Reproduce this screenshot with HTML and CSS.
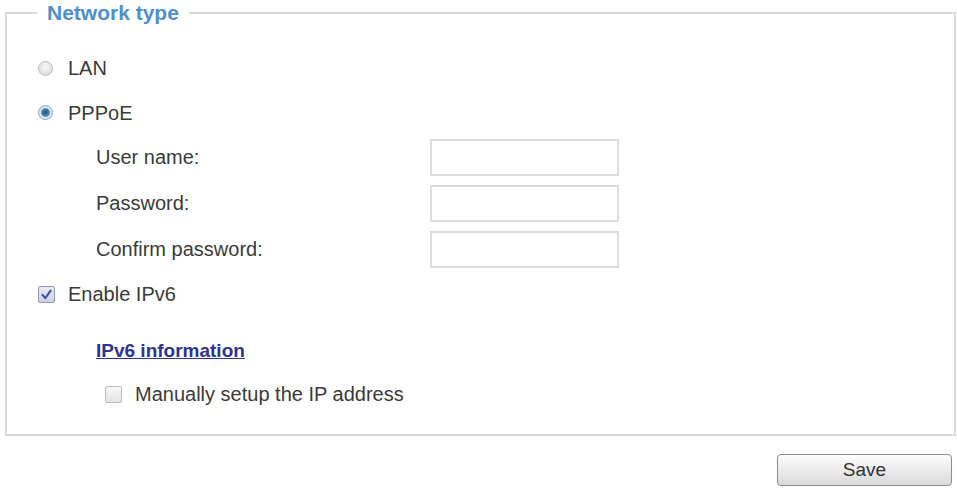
FILE: index.html
```html
<!DOCTYPE html>
<html lang="en">
<head>
<meta charset="utf-8">
<title>Network type</title>
<link rel="stylesheet" href="styles.css">
</head>
<body>
<form class="page">
  <fieldset class="group">
    <legend class="group-title">Network type</legend>
    <div class="row row-lan"><span class="radio"></span><span class="text">LAN</span></div>
    <div class="row row-pppoe"><span class="radio radio-on"></span><span class="text">PPPoE</span></div>
    <div class="fields">
      <div class="field"><span class="field-label">User name:</span><span class="input"></span></div>
      <div class="field"><span class="field-label">Password:</span><span class="input"></span></div>
      <div class="field"><span class="field-label">Confirm password:</span><span class="input"></span></div>
    </div>
    <div class="row row-ipv6">
      <span class="check check-on"><svg class="tick" viewBox="0 0 17 17" width="17" height="17"><path d="M4.5 8.8 L7.3 12.2 L12.6 4.6" fill="none" stroke="#3d4aa3" stroke-width="2" stroke-linecap="round" stroke-linejoin="round"/></svg></span>
      <span class="text">Enable IPv6</span>
    </div>
    <div class="info"><a class="info-link" href="#">IPv6 information</a></div>
    <div class="row row-manual"><span class="check"></span><span class="text">Manually setup the IP address</span></div>
  </fieldset>
  <div class="actions"><button type="button" class="save">Save</button></div>
</form>
</body>
</html>
```

FILE: styles.css
```css
html, body {
  margin: 0;
  padding: 0;
  background: #ffffff;
}

body {
  font-family: "Liberation Sans", Arial, sans-serif;
  font-size: 20px;
  color: #3a3a3a;
}

.page {
  margin: 0;
}

.group {
  margin: 0 1px 0 5px;
  padding: 19px 20px 28px 30px;
  border: 2px solid #dadada;
  min-width: 0;
}

.group-title {
  padding: 0 10px;
  font-weight: 700;
  font-size: 21px;
  line-height: 26px;
  color: #4e8fcc;
}

.row {
  display: flex;
  align-items: center;
}

.row-lan { height: 46px; }
.row-pppoe { height: 43px; }

.radio {
  width: 15px;
  height: 15px;
  margin-left: 1px;
  margin-right: 15px;
  border-radius: 50%;
  box-sizing: border-box;
  border: 1px solid #bcbcbc;
  background: radial-gradient(circle at 50% 40%, #fbfbfb 0, #e4e4e4 55%, #cfcfcf 100%);
  flex: none;
}

.radio-on {
  border-color: #9aa6ae;
  background: radial-gradient(circle at 50% 50%, #1b5c88 0, #2f78a8 2.6px, #5c98bf 4px, #dfe7ec 5px, #c6d0d6 100%);
}

.text {
  line-height: 24px;
}

.fields {
  margin-left: 59px;
}

.field {
  display: grid;
  grid-template-columns: 334px 189px;
  align-items: center;
  height: 46px;
}

.input {
  display: block;
  height: 37px;
  box-sizing: border-box;
  border: 2px solid #dddddd;
  background: #ffffff;
}

.row-ipv6 { height: 44px; }

.check {
  position: relative;
  width: 17px;
  height: 17px;
  margin-left: 1px;
  margin-right: 13px;
  box-sizing: border-box;
  border: 1px solid #bdbdbd;
  border-radius: 2px;
  background: linear-gradient(#f7f7f7, #e3e3e3);
  flex: none;
}

.check-on {
  border-color: #9299b8;
  background: linear-gradient(#e9ebf4, #cdd1e3);
}

.tick {
  display: block;
  margin: -1px;
}

.info {
  margin-left: 59px;
  padding-top: 22px;
  line-height: 24px;
}

.info-link {
  font-weight: 700;
  font-size: 19px;
  color: #2e3390;
  text-decoration: underline;
}

.row-manual {
  margin-top: 19px;
  margin-left: 67px;
  height: 24px;
}

.actions {
  display: flex;
  justify-content: flex-end;
  padding: 18px 5px 0 0;
}

.save {
  width: 175px;
  height: 32px;
  border: 1px solid #8e8e8e;
  border-radius: 4px;
  background: linear-gradient(#fdfdfd, #ececec 50%, #d8d8d8);
  font-family: "Liberation Sans", Arial, sans-serif;
  font-size: 19px;
  color: #333333;
  padding: 0;
  box-shadow: 0 1px 1px rgba(0,0,0,0.12);
}
```
